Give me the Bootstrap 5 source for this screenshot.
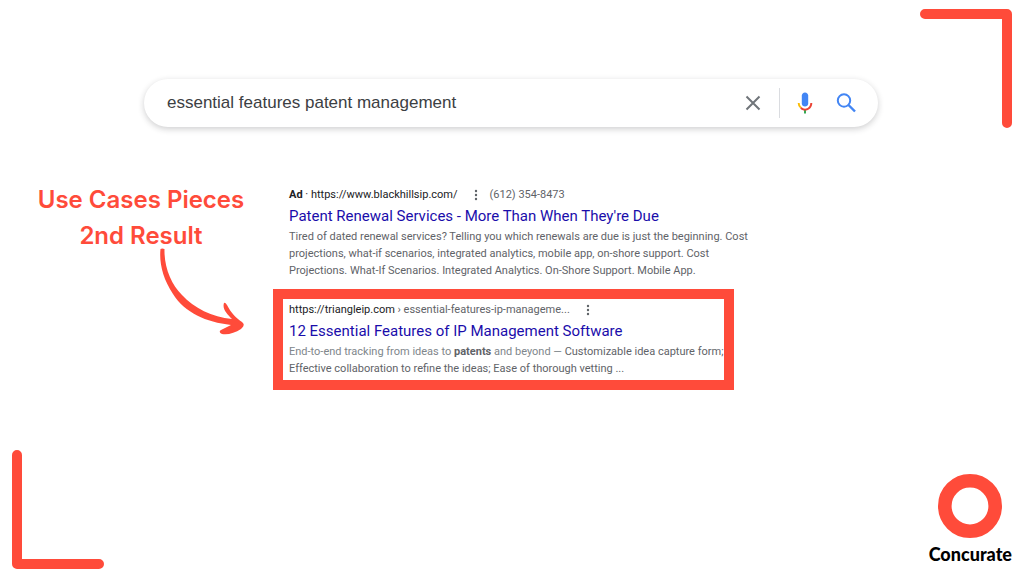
<!DOCTYPE html>
<html lang="en">
<head>
<meta charset="utf-8">
<meta name="viewport" content="width=device-width, initial-scale=1">
<title>Use Cases Pieces – Concurate</title>
<link href="https://cdn.jsdelivr.net/npm/bootstrap@5.3.0/dist/css/bootstrap.min.css" rel="stylesheet">
<style>
  :root { --coral: #ff4b3a; }
  body { font-family: Roboto, sans-serif; background: #fff; color: #5f6368; }
  .slide-top { padding: 9px 12px 0 144px; gap: 42px; }
  .bracket { width: 92px; height: 119px; flex: none; color: var(--coral); }
  .search-bar { height: 48px; padding: 0 20px 0 23px; margin-bottom: 1px; box-shadow: 0 2px 6px rgba(32, 33, 36, .22); }
  .search-bar input { font: 17px/24px "Liberation Sans", Arial, sans-serif; color: #3c4043; outline: 0; }
  .search-bar button { width: 24px; height: 24px; }
  .divider { width: 1px; height: 30px; background: #dadce0; margin: 0 14px; }
  .slide-main { padding: 54px 12px 0 36px; }
  .callout { width: 210px; color: var(--coral); }
  .callout h1 { font: 600 24px/36px Inter, sans-serif; }
  .arrow { width: 88px; height: 92px; margin: -6px 0 0 122px; }
  .results { margin: 4px 0 0 27px; font-size: 11px; line-height: 17px; }
  .ad-result { padding-left: 16px; }
  .results h2 { font-size: 15px; line-height: 23px; margin: 2px 0 0; }
  .results h2 a { color: #1a0dab; }
  .site { color: #202124; }
  .more { width: 12px; height: 12px; margin: 0 8px 0 12px; }
  .more svg { display: block; }
  .faded { color: #80868b; }
  .faded b { color: #5f6368; }
  .marked { width: fit-content; border: 10px solid var(--coral); padding: 2px 1px 3px 6px; margin-top: 10px; }
  .slide-foot { padding: 0 12px 7px; }
  .brand { padding-bottom: 5px; gap: 6px; }
  .brand-name { font: 900 18px/20px Lato, sans-serif; color: #000; }
</style>
</head>
<body>
<div class="min-vh-100 d-flex flex-column overflow-hidden">
  <header class="slide-top d-flex align-items-end">
    <form class="search-bar flex-grow-1 d-flex align-items-center rounded-pill bg-white" role="search">
      <input class="flex-grow-1 border-0 p-0 bg-transparent" type="text" aria-label="Search" value="essential features patent management">
      <button type="reset" class="btn p-0 border-0 d-flex align-items-center justify-content-center" aria-label="Clear">
        <svg width="16" height="16" viewBox="0 0 16 16" fill="none" stroke="#70757a" stroke-width="2"><path d="M1.500 1.500l13 13M14.500 1.500l-13 13"/></svg>
      </button>
      <span class="divider"></span>
      <button type="button" class="btn p-0 border-0 me-3" aria-label="Search by voice">
        <svg class="d-block" width="24" height="24" viewBox="0 0 24 24"><path fill="#4285f4" d="M11 15.500c1.800 0 3.200-1.400 3.200-3.100V4.600c0-1.700-1.400-3.100-3.200-3.100S7.800 2.900 7.800 4.600v7.800c0 1.700 1.400 3.100 3.200 3.100z"/><path fill="#34a853" d="M10 19h2v3.500h-2z"/><path fill="#fbbc04" d="M6.200 17.300A7 7 0 0 1 3.700 12h2c0 1.700.7 3 1.900 4z"/><path fill="#ea4335" d="M11 19.600c-1.900 0-3.600-.8-4.800-2.200L7.600 16c.9 1.100 2 1.700 3.400 1.700 2.900 0 5.300-2.300 5.300-5.700h2c0 4.400-3.200 7.600-7.300 7.600z"/></svg>
      </button>
      <button type="submit" class="btn p-0 border-0" aria-label="Search">
        <svg class="d-block" width="24" height="24" viewBox="0 0 24 24" fill="none" stroke="#4285f4" stroke-width="2"><circle cx="10" cy="9.500" r="6.200"/><path stroke-width="2.400" d="M14.500 14l6.500 6.500"/></svg>
      </button>
    </form>
    <svg class="bracket" viewBox="0 0 92 119" fill="none" stroke="currentColor" stroke-width="10" stroke-linecap="round" stroke-linejoin="round" aria-hidden="true"><path d="M5 5h82v109"/></svg>
  </header>

  <main class="slide-main flex-grow-1 d-flex align-items-start">
    <section class="callout flex-shrink-0">
      <h1 class="m-0 text-center text-nowrap">Use Cases Pieces<br>2nd Result</h1>
      <svg class="arrow d-block" viewBox="0 0 88 92" aria-hidden="true"><path fill="#ff4b3a" d="M2.500 1Q4 0 6.500 1C6 19 13 36 24 47C36 60 54 69 74 71C69 66 64 61 66 55Q67 54 69 57C73 65 78 70 84 74Q88 77 83 81C77 85 70 87 64 86Q60 84 63 82L73 77C48 74 27 65 15 46C5 31 1 15 2.500 1z"/></svg>
    </section>

    <section class="results flex-shrink-0">
      <article class="ad-result text-nowrap">
        <div class="d-flex align-items-center">
          <span class="site"><b>Ad</b> · https://www.blackhillsip.com/</span>
          <button type="button" class="more btn p-0 border-0" aria-label="More about this result"><svg width="12" height="12" viewBox="0 0 12 12" fill="#5f6368"><circle cx="6" cy="2" r="1.200"/><circle cx="6" cy="6" r="1.200"/><circle cx="6" cy="10" r="1.200"/></svg></button>
          <span>(612) 354-8473</span>
        </div>
        <h2 class="fw-normal"><a class="text-decoration-none" href="#">Patent Renewal Services - More Than When They're Due</a></h2>
        <p class="m-0">Tired of dated renewal services? Telling you which renewals are due is just the beginning. Cost<br>projections, what-if scenarios, integrated analytics, mobile app, on-shore support. Cost<br>Projections. What-If Scenarios. Integrated Analytics. On-Shore Support. Mobile App.</p>
      </article>
      <article class="marked text-nowrap">
        <div class="d-flex align-items-center">
          <span><span class="site">https://triangleip.com</span> › essential-features-ip-manageme...</span>
          <button type="button" class="more btn p-0 border-0" aria-label="More about this result"><svg width="12" height="12" viewBox="0 0 12 12" fill="#5f6368"><circle cx="6" cy="2" r="1.200"/><circle cx="6" cy="6" r="1.200"/><circle cx="6" cy="10" r="1.200"/></svg></button>
        </div>
        <h2 class="fw-normal"><a class="text-decoration-none" href="#">12 Essential Features of IP Management Software</a></h2>
        <p class="m-0"><span class="faded">End-to-end tracking from ideas to <b>patents</b> and beyond —</span> Customizable idea capture form;<br>Effective collaboration to refine the ideas; Ease of thorough vetting ...</p>
      </article>
    </section>
  </main>

  <footer class="slide-foot d-flex justify-content-between align-items-end">
    <svg class="bracket" viewBox="0 0 92 119" fill="none" stroke="currentColor" stroke-width="10" stroke-linecap="round" stroke-linejoin="round" aria-hidden="true"><path d="M5 5v109h82"/></svg>
    <div class="brand d-flex flex-column align-items-center">
      <svg width="64" height="64" viewBox="0 0 64 64" aria-hidden="true"><circle cx="32" cy="32" r="25.200" fill="none" stroke="#ff4b3a" stroke-width="13.600"/></svg>
      <span class="brand-name">Concurate</span>
    </div>
  </footer>
</div>
<script src="https://cdn.jsdelivr.net/npm/bootstrap@5.3.0/dist/js/bootstrap.bundle.min.js"></script>
</body>
</html>
